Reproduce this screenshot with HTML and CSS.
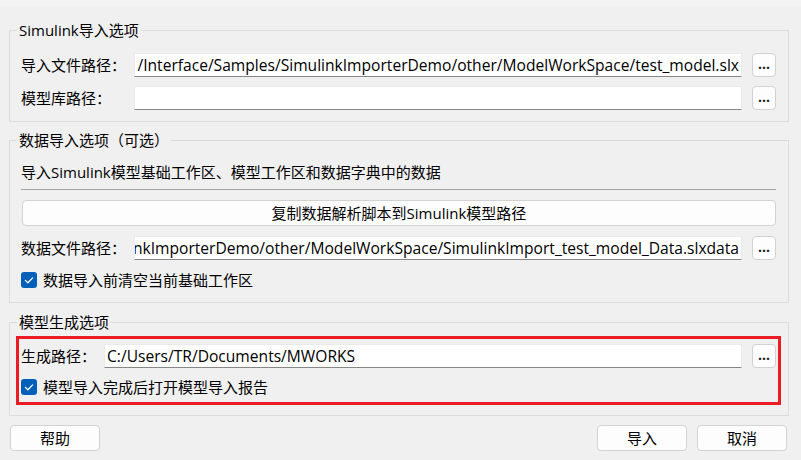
FILE: index.html
```html
<!DOCTYPE html>
<html lang="zh-CN">
<head>
<meta charset="utf-8">
<title>Simulink导入</title>
<link rel="stylesheet" href="styles.css">
</head>
<body>
<div class="edge"></div>
<div class="dialog">
  <fieldset class="group g1">
    <legend>Simulink导入选项</legend>
    <div class="group-body">
      <div class="row">
        <span class="label">导入文件路径：</span>
        <div class="field"><span class="value">/Interface/Samples/SimulinkImporterDemo/other/ModelWorkSpace/test_model.slx</span></div>
        <button class="browse">...</button>
      </div>
      <div class="row">
        <span class="label">模型库路径：</span>
        <div class="field"><span class="value"></span></div>
        <button class="browse">...</button>
      </div>
    </div>
  </fieldset>

  <fieldset class="group g2">
    <legend>数据导入选项（可选）</legend>
    <div class="group-body">
      <div class="desc">导入Simulink模型基础工作区、模型工作区和数据字典中的数据</div>
      <div class="sep"></div>
      <button class="wide">复制数据解析脚本到Simulink模型路径</button>
      <div class="row data-row">
        <span class="label">数据文件路径：</span>
        <div class="field"><span class="value">nkImporterDemo/other/ModelWorkSpace/SimulinkImport_test_model_Data.slxdata</span></div>
        <button class="browse">...</button>
      </div>
      <label class="check">
        <svg class="box" width="16" height="16" viewBox="0 0 16 16"><rect x="0" y="0" width="16" height="16" rx="3" fill="#005fb8"/><polyline points="4.4,8.4 6.9,10.8 11.6,5.9" fill="none" stroke="#ffffff" stroke-width="1.3" stroke-linecap="round" stroke-linejoin="round"/></svg>
        <span>数据导入前清空当前基础工作区</span>
      </label>
    </div>
  </fieldset>

  <fieldset class="group g3">
    <legend>模型生成选项</legend>
    <div class="group-body">
      <div class="highlight">
        <div class="row">
          <span class="label short">生成路径：</span>
          <div class="field"><span class="value">C:/Users/TR/Documents/MWORKS</span></div>
          <button class="browse">...</button>
        </div>
        <label class="check hl-check">
          <svg class="box" width="16" height="16" viewBox="0 0 16 16"><rect x="0" y="0" width="16" height="16" rx="3" fill="#005fb8"/><polyline points="4.4,8.4 6.9,10.8 11.6,5.9" fill="none" stroke="#ffffff" stroke-width="1.3" stroke-linecap="round" stroke-linejoin="round"/></svg>
          <span>模型导入完成后打开模型导入报告</span>
        </label>
      </div>
    </div>
  </fieldset>

  <div class="actions">
    <button class="btn">帮助</button>
    <div class="spacer"></div>
    <button class="btn">导入</button>
    <button class="btn">取消</button>
  </div>
</div>
</body>
</html>
```

FILE: styles.css
```css
html, body {
  margin: 0;
  padding: 0;
  background: #f0f0f0;
}

body {
  width: 801px;
  height: 460px;
  overflow: hidden;
  font-family: "Open Sans", "Noto Sans CJK SC", sans-serif;
  font-size: 15px;
  color: #000;
}

.edge {
  height: 7px;
  background: #f3f3f3;
}

.dialog {
  padding: 13px 12px 0 9px;
}

.group {
  margin: 0;
  padding: 0;
  min-width: 0;
  border: 1px solid #dcdcdc;
}

.group legend {
  margin-left: 7px;
  padding: 0 2px;
  line-height: 20px;
  height: 20px;
}

.g2 { margin-top: 8px; }
.g3 { margin-top: 9px; }

.g1 .group-body {
  padding: 13px 12px 11px 11px;
  display: flex;
  flex-direction: column;
  gap: 9px;
}

.g2 .group-body {
  padding: 11px 12px 10px 11px;
  display: flex;
  flex-direction: column;
}

.g3 .group-body {
  padding: 4px 7px 10px 6px;
}

.row {
  display: flex;
  align-items: center;
  height: 24px;
}

.label {
  width: 113px;
  flex: none;
  white-space: nowrap;
  line-height: 24px;
}

.label.short {
  width: 83px;
}

.field {
  flex: 1;
  min-width: 0;
  height: 24px;
  box-sizing: border-box;
  background: #ffffff;
  border: 1px solid #eaeaea;
  border-bottom-color: #878787;
  display: flex;
  justify-content: flex-end;
  align-items: center;
  overflow: hidden;
  padding: 0 2px 0 2px;
  white-space: nowrap;
}

.g3 .field {
  justify-content: flex-start;
}

.value {
  flex: none;
  font-size: 15.6px;
  line-height: 22px;
}

.browse {
  flex: none;
  width: 24px;
  height: 24px;
  margin-left: 10px;
  padding: 0 0 2px;
  box-sizing: border-box;
  border: 1px solid #d2d2d2;
  border-radius: 4px;
  background: #fdfdfd;
  font-family: "Open Sans", sans-serif;
  font-size: 14px;
  font-weight: bold;
  line-height: 20px;
  color: #1a1a1a;
}

.desc {
  height: 22px;
  line-height: 22px;
  white-space: nowrap;
}

.sep {
  margin-top: 6px;
  height: 1px;
  background: #a3a3a3;
}

.wide {
  margin: 10px 0 0 1px;
  height: 26px;
  box-sizing: border-box;
  border: 1px solid #d2d2d2;
  border-radius: 4px;
  background: #fdfdfd;
  font-family: "Open Sans", "Noto Sans CJK SC", sans-serif;
  font-size: 15px;
  line-height: 22px;
  color: #000;
  padding: 0;
}

.data-row {
  margin-top: 10px;
}

.check {
  display: flex;
  align-items: center;
  gap: 6px;
  height: 24px;
  margin-top: 8px;
  line-height: 22px;
}

.box {
  flex: none;
  display: block;
}

.highlight {
  border: 3px solid #ec1c24;
  padding: 5px 2px 0 2px;
  height: 58px;
  box-sizing: content-box;
}

.hl-check {
  margin-top: 9px;
  height: 20px;
}

.actions {
  display: flex;
  gap: 10px;
  margin: 9px 2px 0 1px;
}

.spacer {
  flex: 1;
}

.btn {
  width: 90px;
  height: 26px;
  box-sizing: border-box;
  border: 1px solid #d2d2d2;
  border-radius: 4px;
  background: #fdfdfd;
  font-family: "Open Sans", "Noto Sans CJK SC", sans-serif;
  font-size: 15px;
  line-height: 22px;
  color: #000;
  padding: 0;
}
```
